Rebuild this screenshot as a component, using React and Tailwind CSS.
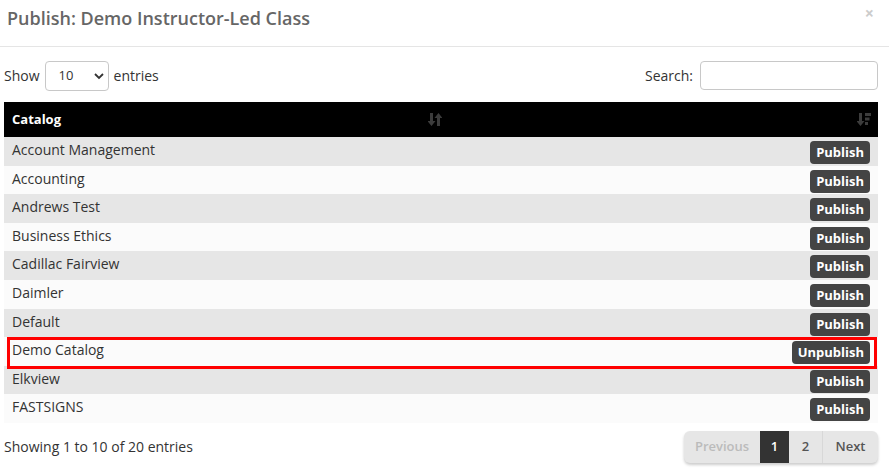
import { useState } from "react";

const CATALOGS = [
  { name: "Account Management", published: false },
  { name: "Accounting", published: false },
  { name: "Andrews Test", published: false },
  { name: "Business Ethics", published: false },
  { name: "Cadillac Fairview", published: false },
  { name: "Daimler", published: false },
  { name: "Default", published: false },
  { name: "Demo Catalog", published: true },
  { name: "Elkview", published: false },
  { name: "FASTSIGNS", published: false },
];

// ─── sort icons ───────────────────────────────────────────────────────────────
function SortBoth() {
  return (
    <svg width="14" height="15" viewBox="0 0 14 15" className="text-[#3c3c3c]">
      <path d="M2 1h3v8h2.5l-4 5-4-5h2.5z" fill="currentColor" />
      <path d="M9 14h3V6h2.5l-4-5-4 5h2.5z" fill="currentColor" />
    </svg>
  );
}

function SortDesc() {
  return (
    <svg width="14" height="15" viewBox="0 0 14 15" className="text-[#3c3c3c]">
      <path d="M2 1h3v8h2.5l-4 5-4-5h2.5z" fill="currentColor" />
      <rect x="8" y="1" width="6" height="3" fill="currentColor" />
      <rect x="8" y="5.5" width="4.5" height="3" fill="currentColor" />
      <rect x="8" y="10" width="3" height="3" fill="currentColor" />
    </svg>
  );
}

function Row({ item, index }) {
  const striped = index % 2 === 0 ? "bg-[#e6e6e6]" : "bg-[#fbfbfb]";
  return (
    <div className={`flex items-start h-[28.6px] ${striped}`}>
      <div className="w-[441px] pl-2 pt-[3px] text-[14px] text-[#333] leading-[20px]">
        {item.name}
      </div>
      <div className="flex-1 flex justify-end pr-2 pt-[4px]">
        <button className="h-[23px] px-[6px] rounded-[4px] bg-[#444] text-white text-[13px] font-bold leading-none">
          {item.published ? "Unpublish" : "Publish"}
        </button>
      </div>
    </div>
  );
}

export default function App() {
  const [search, setSearch] = useState("");

  return (
    <div className="w-[889px] h-[471px] bg-white font-['Open_Sans',sans-serif] text-[#333] overflow-hidden">
      {/* header */}
      <div className="flex items-start justify-between h-[47px] border-b border-[#e5e5e5] pl-[7px] pr-[15px]">
        <h1 className="pt-[5px] text-[18px] font-semibold text-[#666] leading-[26px]">
          Publish: Demo Instructor-Led Class
        </h1>
        <span className="pt-[3px] text-[16px] font-bold text-[#ccc] leading-[20px]">×</span>
      </div>

      <div className="px-[4px] pr-[11px]">
        {/* controls */}
        <div className="flex items-center justify-between h-[55px] pt-[2px]">
          <div className="flex items-center gap-[5px] text-[14px]">
            <span>Show</span>
            <div className="relative">
              <select className="appearance-none w-[64px] h-[30px] pl-[13px] text-[13px] text-[#333] border border-[#c8c8c8] rounded-[4px] bg-white">
                <option>10</option>
              </select>
              <svg width="10" height="8" viewBox="0 0 10 8" className="absolute right-[5px] top-[11px]">
                <path d="M1 2l4 4 4-4" fill="none" stroke="#333" strokeWidth="1.8" />
              </svg>
            </div>
            <span>entries</span>
          </div>
          <div className="flex items-center gap-[7px] text-[14px]">
            <span>Search:</span>
            <input
              value={search}
              onChange={(e) => setSearch(e.target.value)}
              className="w-[178px] h-[29px] border border-[#c8c8c8] rounded-[4px] outline-none px-2"
            />
          </div>
        </div>

        {/* table */}
        <div>
          <div className="flex items-center h-[35px] bg-black text-white">
            <div className="w-[441px] flex items-center justify-between pl-2 pr-[3px]">
              <span className="text-[13px] font-bold">Catalog</span>
              <SortBoth />
            </div>
            <div className="flex-1 flex justify-end pr-[7px]">
              <SortDesc />
            </div>
          </div>

          {CATALOGS.map((item, i) =>
            item.published ? (
              <div key={item.name} className="relative">
                <Row item={item} index={i} />
                <div className="absolute left-[3px] right-[1px] top-0 h-[32px] border-[3px] border-[#f00] pointer-events-none" />
              </div>
            ) : (
              <Row key={item.name} item={item} index={i} />
            )
          )}
        </div>

        {/* footer */}
        <div className="flex items-center justify-between pt-[8px]">
          <span className="text-[14px]">Showing 1 to 10 of 20 entries</span>
          <div className="flex h-[32px] rounded-[6px] bg-[#e6e6e6] text-[13px] font-semibold shadow-[0_2px_3px_rgba(0,0,0,0.2)] overflow-hidden">
            <span className="w-[76px] flex items-center justify-center text-[#bbb]">Previous</span>
            <span className="w-[29px] flex items-center justify-center bg-[#333] text-white">1</span>
            <span className="w-[34px] flex items-center justify-center text-[#555] border-r border-[#d8d8d8]">2</span>
            <span className="w-[55px] flex items-center justify-center text-[#555]">Next</span>
          </div>
        </div>
      </div>
    </div>
  );
}
